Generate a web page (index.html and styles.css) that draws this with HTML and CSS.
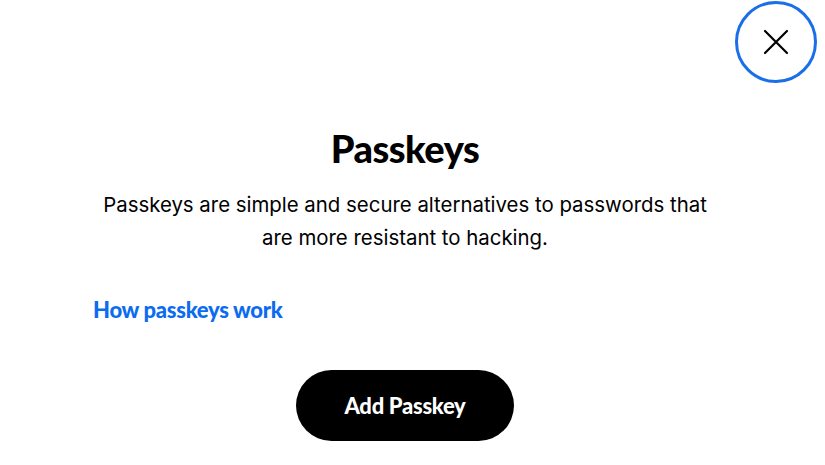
FILE: index.html
```html
<!DOCTYPE html>
<html lang="en">
<head>
  <meta charset="UTF-8" />
  <meta name="viewport" content="width=device-width, initial-scale=1.0"/>
  <title>Passkeys</title>
  <link rel="stylesheet" href="styles.css">
</head>
<body>
  <div class="modal">
    <div class="modal-top">
      <button class="close-button" aria-label="Close">
        <svg width="26" height="26" viewBox="0 0 26 26">
          <path d="M2 2 L24 24 M24 2 L2 24" stroke="#000" stroke-width="2.2" stroke-linecap="round" fill="none"/>
        </svg>
      </button>
    </div>

    <div class="content">
      <h1 class="title">Passkeys</h1>
      <p class="description">Passkeys are simple and secure alternatives to passwords that are more resistant to hacking.</p>
      <a class="help-link" href="#">How passkeys work</a>
      <button class="add-button">Add Passkey</button>
    </div>
  </div>
</body>
</html>
```

FILE: styles.css
```css
* {
  margin: 0;
  padding: 0;
  box-sizing: border-box;
}

body {
  background: #ffffff;
  color: #000000;
  font-family: 'Inter', 'Liberation Sans', sans-serif;
  width: 825px;
  height: 465px;
  overflow: hidden;
}

.modal {
  display: flex;
  flex-direction: column;
}

.modal-top {
  display: flex;
  justify-content: flex-end;
  padding: 1px 8px 0 0;
}

.close-button {
  width: 82px;
  height: 82px;
  border-radius: 50%;
  border: 3px solid #1a6fe8;
  background: #fff;
  display: flex;
  align-items: center;
  justify-content: center;
  cursor: pointer;
}

.content {
  width: 624px;
  margin: 42px 0 0 93px;
  display: flex;
  flex-direction: column;
  align-items: center;
}

.title {
  font-family: 'Lato', sans-serif;
  font-weight: 900;
  font-size: 38px;
  line-height: 46px;
  letter-spacing: -0.5px;
}

.description {
  margin-top: 17px;
  font-size: 20.4px;
  line-height: 33px;
  text-align: center;
  max-width: 614px;
}

.help-link {
  align-self: flex-start;
  margin-top: 42px;
  font-family: 'Lato', sans-serif;
  font-weight: 900;
  font-size: 22px;
  color: #0b6cf0;
  text-decoration: none;
  letter-spacing: -0.3px;
}

.add-button {
  margin-top: 47px;
  width: 218px;
  height: 71px;
  border: none;
  border-radius: 36px;
  background: #000;
  color: #fff;
  font-family: 'Lato', sans-serif;
  font-weight: 900;
  font-size: 22px;
  letter-spacing: -0.3px;
  cursor: pointer;
}
```
